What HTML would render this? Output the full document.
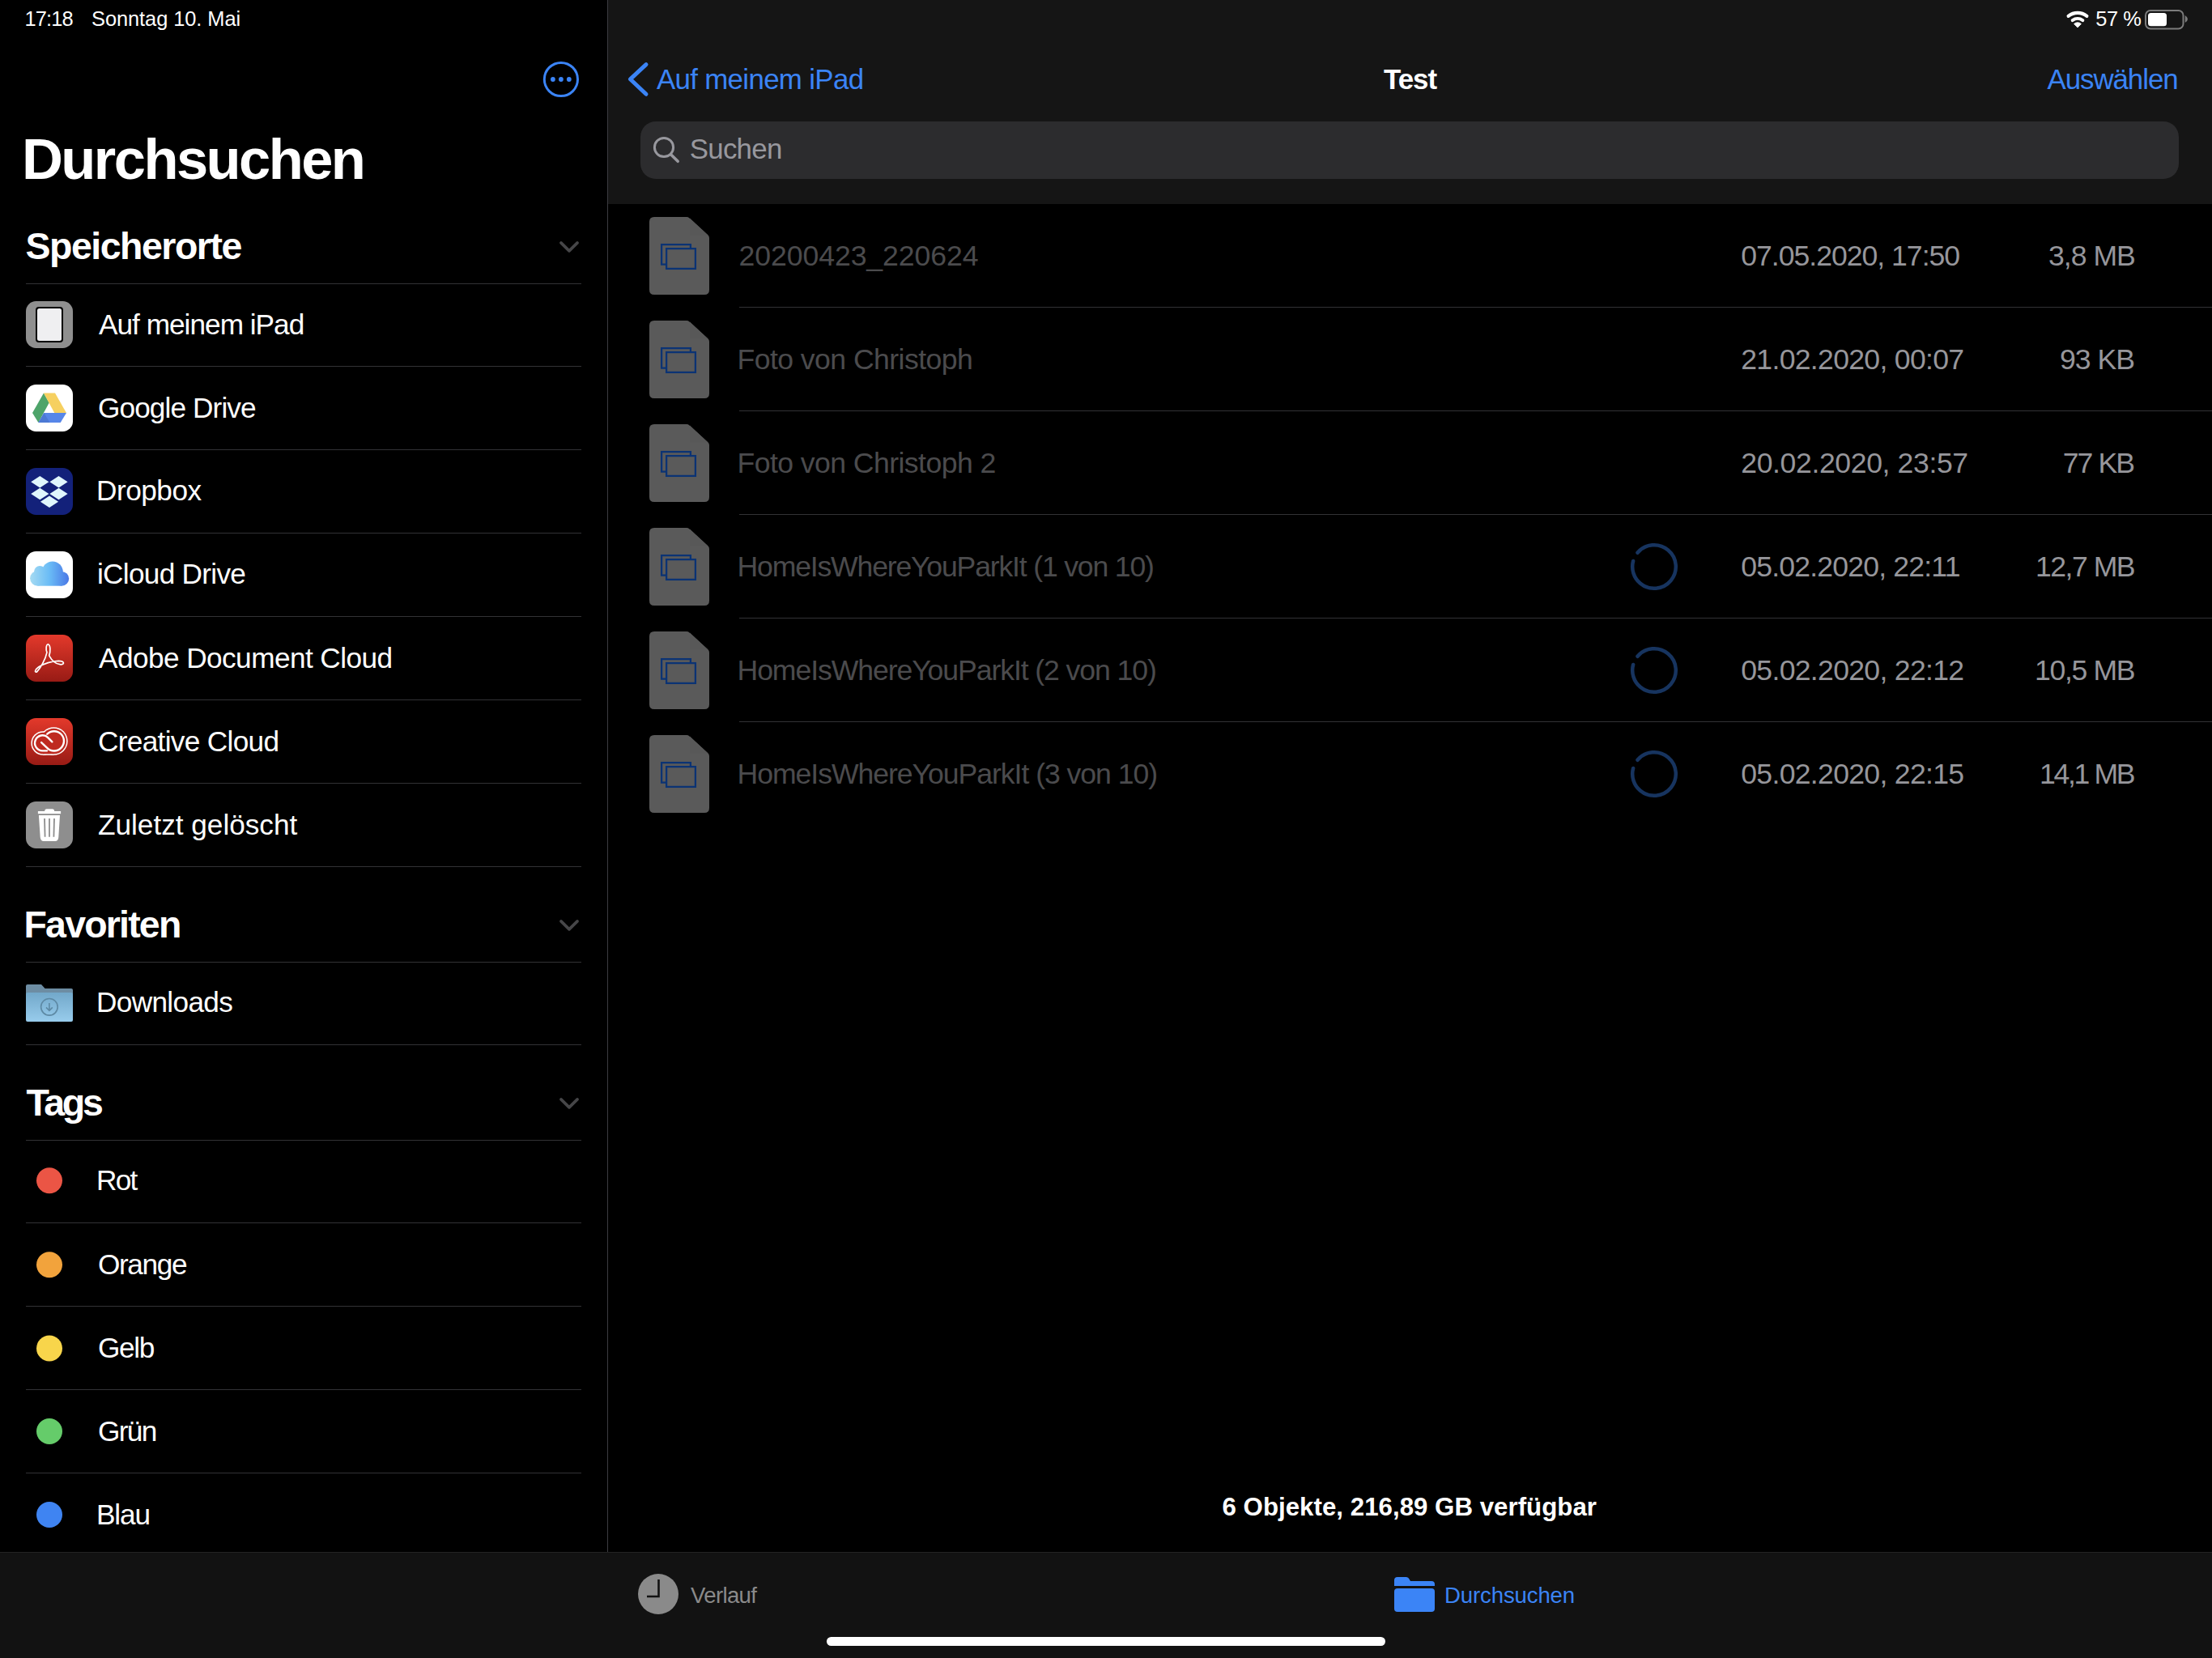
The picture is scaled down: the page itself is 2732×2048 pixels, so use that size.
<!DOCTYPE html>
<html><head><meta charset="utf-8"><style>
html,body{margin:0;padding:0;}
body{width:2732px;height:2048px;background:#000;overflow:hidden;position:relative;font-family:"Liberation Sans",sans-serif;}
svg{overflow:visible}
</style></head><body>
<div style="position:absolute;left:751px;top:0px;width:1981px;height:252px;background:#151515;"></div>
<div style="position:absolute;left:750px;top:0px;width:1px;height:1917px;background:#3c3c41;"></div>
<div style="position:absolute;left:791px;top:150px;width:1900px;height:71px;background:#2c2c2e;border-radius:19px;"></div>
<div style="position:absolute;left:0px;top:1917px;width:2732px;height:131px;background:#121212;"></div>
<div style="position:absolute;left:0px;top:1917px;width:2732px;height:1px;background:#232323;"></div>
<div style="position:absolute;left:32px;top:350px;width:686px;height:1px;background:#323235;"></div>
<div style="position:absolute;left:32px;top:452px;width:686px;height:1px;background:#323235;"></div>
<div style="position:absolute;left:32px;top:555px;width:686px;height:1px;background:#323235;"></div>
<div style="position:absolute;left:32px;top:658px;width:686px;height:1px;background:#323235;"></div>
<div style="position:absolute;left:32px;top:761px;width:686px;height:1px;background:#323235;"></div>
<div style="position:absolute;left:32px;top:864px;width:686px;height:1px;background:#323235;"></div>
<div style="position:absolute;left:32px;top:967px;width:686px;height:1px;background:#323235;"></div>
<div style="position:absolute;left:32px;top:1070px;width:686px;height:1px;background:#323235;"></div>
<div style="position:absolute;left:32px;top:1188px;width:686px;height:1px;background:#323235;"></div>
<div style="position:absolute;left:32px;top:1290px;width:686px;height:1px;background:#323235;"></div>
<div style="position:absolute;left:32px;top:1408px;width:686px;height:1px;background:#323235;"></div>
<div style="position:absolute;left:32px;top:1510px;width:686px;height:1px;background:#323235;"></div>
<div style="position:absolute;left:32px;top:1613px;width:686px;height:1px;background:#323235;"></div>
<div style="position:absolute;left:32px;top:1716px;width:686px;height:1px;background:#323235;"></div>
<div style="position:absolute;left:32px;top:1819px;width:686px;height:1px;background:#323235;"></div>
<div style="position:absolute;left:913px;top:379px;width:1819px;height:1px;background:#323235;"></div>
<div style="position:absolute;left:913px;top:507px;width:1819px;height:1px;background:#323235;"></div>
<div style="position:absolute;left:913px;top:635px;width:1819px;height:1px;background:#323235;"></div>
<div style="position:absolute;left:913px;top:763px;width:1819px;height:1px;background:#323235;"></div>
<div style="position:absolute;left:913px;top:891px;width:1819px;height:1px;background:#323235;"></div>
<svg style="position:absolute;left:668px;top:74px" width="50" height="50" viewBox="0 0 50 50"><circle cx="24.9" cy="24" r="20.6" fill="none" stroke="#3b84f6" stroke-width="3"/><circle cx="14.9" cy="24" r="2.9" fill="#3b84f6"/><circle cx="24.9" cy="24" r="2.9" fill="#3b84f6"/><circle cx="34.8" cy="24" r="2.9" fill="#3b84f6"/></svg>
<svg style="position:absolute;left:686px;top:290px" width="34" height="28" viewBox="0 0 34 28"><polyline points="6.9,9.9 17,19.9 27.1,9.9" fill="none" stroke="#464648" stroke-width="3.6" stroke-linecap="round" stroke-linejoin="round"/></svg>
<svg style="position:absolute;left:686px;top:1128px" width="34" height="28" viewBox="0 0 34 28"><polyline points="6.9,9.9 17,19.9 27.1,9.9" fill="none" stroke="#464648" stroke-width="3.6" stroke-linecap="round" stroke-linejoin="round"/></svg>
<svg style="position:absolute;left:686px;top:1347.5px" width="34" height="28" viewBox="0 0 34 28"><polyline points="6.9,9.9 17,19.9 27.1,9.9" fill="none" stroke="#464648" stroke-width="3.6" stroke-linecap="round" stroke-linejoin="round"/></svg>
<svg style="position:absolute;left:770px;top:70px" width="40" height="56" viewBox="0 0 40 56"><polyline points="28,9.7 8.4,27.8 28,46.3" fill="none" stroke="#3b84f6" stroke-width="5" stroke-linecap="round" stroke-linejoin="round"/></svg>
<svg style="position:absolute;left:800px;top:160px" width="45" height="45" viewBox="0 0 45 45"><circle cx="20" cy="22" r="11.6" fill="none" stroke="#98989e" stroke-width="3"/><line x1="28.5" y1="30.7" x2="37.2" y2="39.3" stroke="#98989e" stroke-width="3.6" stroke-linecap="round"/></svg>
<svg style="position:absolute;left:2550px;top:12px" width="32" height="24" viewBox="0 0 32 24"><g fill="none" stroke="#fff" stroke-linecap="round"><path d="M4.58,7.89 A18.15,18.15 0 0 1 27.42,7.89" stroke-width="4.1"/><path d="M9.64,13.09 A10.95,10.95 0 0 1 22.36,13.09" stroke-width="3.9"/></g><path d="M16,22 L11.55,17.55 A6.3,6.3 0 0 1 20.45,17.55 Z" fill="#fff" stroke="#fff" stroke-width="0.8" stroke-linejoin="round"/></svg>
<svg style="position:absolute;left:2646px;top:10px" width="60" height="30" viewBox="0 0 60 30"><rect x="4" y="3" width="46.5" height="22.5" rx="6" fill="none" stroke="#7c7c7c" stroke-width="2"/><rect x="7" y="6" width="23" height="16.3" rx="3.5" fill="#fff"/><path d="M52.7,9 Q56,11 56,13.5 Q56,16 52.7,18 Z" fill="#7c7c7c"/></svg>
<svg style="position:absolute;left:32px;top:372px" width="58" height="58" viewBox="0 0 58 58"><rect x="0" y="0" width="58" height="58" rx="12.5" fill="#8f8f8f"/><rect x="12" y="7" width="34" height="44" rx="4" fill="#000"/><rect x="14" y="9" width="30" height="40" rx="2.5" fill="#efeff1"/></svg>
<svg style="position:absolute;left:32px;top:475px" width="58" height="58" viewBox="0 0 58 58"><rect x="0" y="0" width="58" height="58" rx="12.5" fill="#ffffff"/><polygon points="22,10.6 28.7,22.5 15.4,47 8,35.1" fill="#4ea46a"/><polygon points="22,10.6 36,10.6 50,35.1 35.3,35.1" fill="#f6d060"/><polygon points="22.3,35.1 50,35.1 42.7,47 15.4,47" fill="#5786e8"/><polygon points="15.4,47 22.3,35.1 29.5,47" fill="#4c79d4"/></svg>
<svg style="position:absolute;left:32px;top:578px" width="58" height="58" viewBox="0 0 58 58"><rect x="0" y="0" width="58" height="58" rx="12.5" fill="#13217a"/><polygon points="6.200000000000001,17.3 17.3,10.100000000000001 28.4,17.3 17.3,24.5" fill="#e0f6fd"/><polygon points="29.4,17.3 40.5,10.100000000000001 51.6,17.3 40.5,24.5" fill="#e0f6fd"/><polygon points="6.200000000000001,32 17.3,24.8 28.4,32 17.3,39.2" fill="#e0f6fd"/><polygon points="29.4,32 40.5,24.8 51.6,32 40.5,39.2" fill="#e0f6fd"/><polygon points="17.9,41.7 29,34.5 40.1,41.7 29,48.900000000000006" fill="#e0f6fd"/></svg>
<svg style="position:absolute;left:32px;top:681px" width="58" height="58" viewBox="0 0 58 58"><rect x="0" y="0" width="58" height="58" rx="12.5" fill="#ffffff"/><defs><linearGradient id="icg" gradientUnits="userSpaceOnUse" x1="5" y1="0" x2="53" y2="0"><stop offset="0" stop-color="#a6dbf2"/><stop offset="0.5" stop-color="#6abcf6"/><stop offset="1" stop-color="#4a78e6"/></linearGradient></defs><g fill="url(#icg)"><circle cx="14.5" cy="33.3" r="9.4"/><circle cx="17.2" cy="25" r="7.1"/><circle cx="32.8" cy="25.5" r="13"/><circle cx="44.3" cy="33.8" r="8.9"/><rect x="14.5" y="33.3" width="29.8" height="9.4"/></g></svg>
<svg style="position:absolute;left:32px;top:784px" width="58" height="58" viewBox="0 0 58 58"><defs><linearGradient id="rg1" x1="0" y1="0" x2="0" y2="1"><stop offset="0" stop-color="#e3392b"/><stop offset="1" stop-color="#981b15"/></linearGradient></defs><rect width="58" height="58" rx="12.5" fill="url(#rg1)"/><path d="M27.32,11.72 C25.03,12.18 24.34,17.69 25.94,21.82 C24.11,30.99 17.69,41.54 13.56,45.9 C10.35,47.05 10.81,43.38 15.85,39.71 C21.82,36.04 32.37,32.37 40.17,32.28 C47.96,32.37 48.42,37.41 42,36.72 C36.04,36.04 31.45,30.99 28.7,25.94 C30.53,20.44 30.53,12.64 27.32,11.72 Z" fill="none" stroke="#fff" stroke-width="1.7" stroke-linejoin="round"/></svg>
<svg style="position:absolute;left:32px;top:887px" width="58" height="58" viewBox="0 0 58 58"><defs><linearGradient id="rg2" x1="0" y1="0" x2="0" y2="1"><stop offset="0" stop-color="#e3392b"/><stop offset="1" stop-color="#981b15"/></linearGradient></defs><rect width="58" height="58" rx="12.5" fill="url(#rg2)"/><g fill="#fff"><circle cx="21.1" cy="31" r="14.75"/><circle cx="34.4" cy="28.5" r="17.25"/><rect x="21.1" y="30" width="13.3" height="15.75"/></g><g fill="#bf2a20"><circle cx="21.1" cy="31" r="13.25"/><circle cx="34.4" cy="28.5" r="15.75"/><rect x="21.1" y="30" width="13.3" height="14.25"/></g><g fill="none" stroke="#fff" stroke-width="2.4" stroke-linecap="round"><path d="M26,40.35 H20.55 A9.5,9.5 0 1 1 27.27,24.13 L32.4,29.3"/><path d="M19.1,30.1 L26.21,36.94 A12.15,12.15 0 1 0 26.21,19.76"/></g></svg>
<svg style="position:absolute;left:32px;top:990px" width="58" height="58" viewBox="0 0 58 58"><rect x="0" y="0" width="58" height="58" rx="12.5" fill="#8e8e8e"/><rect x="23.2" y="9.2" width="11.9" height="5" rx="2.5" fill="#fff"/><rect x="14.9" y="12" width="28.2" height="3.2" fill="#fff"/><path d="M15.9,17 H42 L40.3,44 Q40.1,49 36,49 H22 Q18,49 17.7,44 Z" fill="#fff"/><g stroke="#8e8e8e" stroke-width="1.8"><line x1="23" y1="21" x2="23.6" y2="43.8"/><line x1="29" y1="21" x2="29" y2="43.8"/><line x1="35" y1="21" x2="34.4" y2="43.8"/></g></svg>
<svg style="position:absolute;left:32px;top:1214px" width="58" height="50" viewBox="0 0 58 50"><defs><linearGradient id="fg" x1="0" y1="0" x2="0" y2="1"><stop offset="0" stop-color="#72a8ca"/><stop offset="1" stop-color="#98ccec"/></linearGradient></defs><path d="M0,4 Q0,2 2,2 H19 L23.6,7 H56 Q58,7 58,9 V14 H0 Z" fill="#6d8da3"/><rect x="0" y="12" width="58" height="36" rx="2" fill="url(#fg)"/><circle cx="28.9" cy="29.8" r="10.3" fill="none" stroke="#5d89a4" stroke-width="1.6"/><path d="M28.9,25 V34.4 M25,30.4 L28.9,34.4 L32.8,30.4" fill="none" stroke="#5d89a4" stroke-width="1.6"/></svg>
<svg style="position:absolute;left:44px;top:1441px" width="34" height="34" viewBox="0 0 34 34"><circle cx="17" cy="17.299999999999955" r="16" fill="#eb5545"/></svg>
<svg style="position:absolute;left:44px;top:1545px" width="34" height="34" viewBox="0 0 34 34"><circle cx="17" cy="17.299999999999955" r="16" fill="#f2a33c"/></svg>
<svg style="position:absolute;left:44px;top:1648px" width="34" height="34" viewBox="0 0 34 34"><circle cx="17" cy="17.5" r="16" fill="#f8d54b"/></svg>
<svg style="position:absolute;left:44px;top:1751px" width="34" height="34" viewBox="0 0 34 34"><circle cx="17" cy="17" r="16" fill="#65cc6a"/></svg>
<svg style="position:absolute;left:44px;top:1854px" width="34" height="34" viewBox="0 0 34 34"><circle cx="17" cy="17" r="16" fill="#3f84f2"/></svg>
<svg style="position:absolute;left:802px;top:268px" width="74" height="96" viewBox="0 0 74 96"><path d="M6,0 H46 Q48,0 49.5,1.4 L72.6,22.6 Q74,24 74,26 V90 Q74,96 68,96 H6 Q0,96 0,90 V6 Q0,0 6,0 Z" fill="#5a5a5a"/><path d="M50,1.5 V22.6 H72.5 Z" fill="#585858"/><rect x="15.1" y="34.1" width="35.8" height="24.5" fill="none" stroke="#0b3374" stroke-width="2.25"/><rect x="21.1" y="39.1" width="35.8" height="24.8" fill="#5a5a5a" stroke="#0b3374" stroke-width="2.25"/></svg>
<svg style="position:absolute;left:802px;top:396px" width="74" height="96" viewBox="0 0 74 96"><path d="M6,0 H46 Q48,0 49.5,1.4 L72.6,22.6 Q74,24 74,26 V90 Q74,96 68,96 H6 Q0,96 0,90 V6 Q0,0 6,0 Z" fill="#5a5a5a"/><path d="M50,1.5 V22.6 H72.5 Z" fill="#585858"/><rect x="15.1" y="34.1" width="35.8" height="24.5" fill="none" stroke="#0b3374" stroke-width="2.25"/><rect x="21.1" y="39.1" width="35.8" height="24.8" fill="#5a5a5a" stroke="#0b3374" stroke-width="2.25"/></svg>
<svg style="position:absolute;left:802px;top:524px" width="74" height="96" viewBox="0 0 74 96"><path d="M6,0 H46 Q48,0 49.5,1.4 L72.6,22.6 Q74,24 74,26 V90 Q74,96 68,96 H6 Q0,96 0,90 V6 Q0,0 6,0 Z" fill="#5a5a5a"/><path d="M50,1.5 V22.6 H72.5 Z" fill="#585858"/><rect x="15.1" y="34.1" width="35.8" height="24.5" fill="none" stroke="#0b3374" stroke-width="2.25"/><rect x="21.1" y="39.1" width="35.8" height="24.8" fill="#5a5a5a" stroke="#0b3374" stroke-width="2.25"/></svg>
<svg style="position:absolute;left:802px;top:652px" width="74" height="96" viewBox="0 0 74 96"><path d="M6,0 H46 Q48,0 49.5,1.4 L72.6,22.6 Q74,24 74,26 V90 Q74,96 68,96 H6 Q0,96 0,90 V6 Q0,0 6,0 Z" fill="#5a5a5a"/><path d="M50,1.5 V22.6 H72.5 Z" fill="#585858"/><rect x="15.1" y="34.1" width="35.8" height="24.5" fill="none" stroke="#0b3374" stroke-width="2.25"/><rect x="21.1" y="39.1" width="35.8" height="24.8" fill="#5a5a5a" stroke="#0b3374" stroke-width="2.25"/></svg>
<svg style="position:absolute;left:802px;top:780px" width="74" height="96" viewBox="0 0 74 96"><path d="M6,0 H46 Q48,0 49.5,1.4 L72.6,22.6 Q74,24 74,26 V90 Q74,96 68,96 H6 Q0,96 0,90 V6 Q0,0 6,0 Z" fill="#5a5a5a"/><path d="M50,1.5 V22.6 H72.5 Z" fill="#585858"/><rect x="15.1" y="34.1" width="35.8" height="24.5" fill="none" stroke="#0b3374" stroke-width="2.25"/><rect x="21.1" y="39.1" width="35.8" height="24.8" fill="#5a5a5a" stroke="#0b3374" stroke-width="2.25"/></svg>
<svg style="position:absolute;left:802px;top:908px" width="74" height="96" viewBox="0 0 74 96"><path d="M6,0 H46 Q48,0 49.5,1.4 L72.6,22.6 Q74,24 74,26 V90 Q74,96 68,96 H6 Q0,96 0,90 V6 Q0,0 6,0 Z" fill="#5a5a5a"/><path d="M50,1.5 V22.6 H72.5 Z" fill="#585858"/><rect x="15.1" y="34.1" width="35.8" height="24.5" fill="none" stroke="#0b3374" stroke-width="2.25"/><rect x="21.1" y="39.1" width="35.8" height="24.8" fill="#5a5a5a" stroke="#0b3374" stroke-width="2.25"/></svg>
<svg style="position:absolute;left:2013px;top:670px" width="60" height="60" viewBox="0 0 60 60"><circle cx="30" cy="30" r="26.8" fill="none" stroke="#17345f" stroke-width="4.5" stroke-linecap="round" stroke-dasharray="155.76 12.63" transform="rotate(-140 30 30)"/></svg>
<svg style="position:absolute;left:2013px;top:798px" width="60" height="60" viewBox="0 0 60 60"><circle cx="30" cy="30" r="26.8" fill="none" stroke="#17345f" stroke-width="4.5" stroke-linecap="round" stroke-dasharray="155.76 12.63" transform="rotate(-140 30 30)"/></svg>
<svg style="position:absolute;left:2013px;top:926px" width="60" height="60" viewBox="0 0 60 60"><circle cx="30" cy="30" r="26.8" fill="none" stroke="#17345f" stroke-width="4.5" stroke-linecap="round" stroke-dasharray="155.76 12.63" transform="rotate(-140 30 30)"/></svg>
<svg style="position:absolute;left:786px;top:1942px" width="54" height="54" viewBox="0 0 54 54"><circle cx="27" cy="27" r="25" fill="#8a8a8a"/><path d="M27.5,9 V30 H13" fill="none" stroke="#121212" stroke-width="2.6"/></svg>
<svg style="position:absolute;left:1720px;top:1946px" width="54" height="48" viewBox="0 0 54 48"><path d="M2,6 Q2,2 6,2 H17 Q19.5,2 20.5,4.5 L22,7 H48 Q52,7 52,11 V13 H2 Z" fill="#3b84f6"/><rect x="2" y="16" width="50" height="29" rx="4" fill="#3b84f6"/></svg>
<div style="position:absolute;left:1021px;top:2022px;width:690px;height:11px;background:#ffffff;border-radius:5.5px;"></div>
<div style="position:absolute;left:30.50px;top:8.00px;font-weight:400;font-size:25.436px;letter-spacing:-0.875px;line-height:31px;color:#ffffff;white-space:nowrap">17:18</div>
<div style="position:absolute;left:113.00px;top:8.00px;font-weight:400;font-size:25.436px;letter-spacing:-0.071px;line-height:31px;color:#ffffff;white-space:nowrap">Sonntag 10. Mai</div>
<div style="position:absolute;left:2588.30px;top:8.00px;font-weight:400;font-size:25.436px;letter-spacing:-0.500px;line-height:31px;color:#ffffff;white-space:nowrap">57 %</div>
<div style="position:absolute;left:27.00px;top:154.00px;font-weight:700;font-size:70.495px;letter-spacing:-2.550px;line-height:85px;color:#ffffff;white-space:nowrap">Durchsuchen</div>
<div style="position:absolute;left:31.50px;top:276.00px;font-weight:700;font-size:46.512px;letter-spacing:-1.500px;line-height:56px;color:#ffffff;white-space:nowrap">Speicherorte</div>
<div style="position:absolute;left:122.00px;top:380.00px;font-weight:400;font-size:35.248px;letter-spacing:-1.000px;line-height:42px;color:#ffffff;white-space:nowrap">Auf meinem iPad</div>
<div style="position:absolute;left:121.00px;top:483.00px;font-weight:400;font-size:35.248px;letter-spacing:-0.909px;line-height:42px;color:#ffffff;white-space:nowrap">Google Drive</div>
<div style="position:absolute;left:119.00px;top:585.00px;font-weight:400;font-size:35.248px;letter-spacing:-0.500px;line-height:42px;color:#ffffff;white-space:nowrap">Dropbox</div>
<div style="position:absolute;left:120.00px;top:688.00px;font-weight:400;font-size:35.248px;letter-spacing:-0.727px;line-height:42px;color:#ffffff;white-space:nowrap">iCloud Drive</div>
<div style="position:absolute;left:122.00px;top:792.00px;font-weight:400;font-size:35.248px;letter-spacing:-0.579px;line-height:42px;color:#ffffff;white-space:nowrap">Adobe Document Cloud</div>
<div style="position:absolute;left:121.00px;top:895.00px;font-weight:400;font-size:35.248px;letter-spacing:-0.692px;line-height:42px;color:#ffffff;white-space:nowrap">Creative Cloud</div>
<div style="position:absolute;left:121.00px;top:998.00px;font-weight:400;font-size:35.248px;letter-spacing:-0.033px;line-height:42px;color:#ffffff;white-space:nowrap">Zuletzt gelöscht</div>
<div style="position:absolute;left:29.50px;top:1114.00px;font-weight:700;font-size:46.512px;letter-spacing:-1.812px;line-height:56px;color:#ffffff;white-space:nowrap">Favoriten</div>
<div style="position:absolute;left:119.00px;top:1217.00px;font-weight:400;font-size:35.248px;letter-spacing:-0.688px;line-height:42px;color:#ffffff;white-space:nowrap">Downloads</div>
<div style="position:absolute;left:32.50px;top:1334.00px;font-weight:700;font-size:46.512px;letter-spacing:-3.250px;line-height:56px;color:#ffffff;white-space:nowrap">Tags</div>
<div style="position:absolute;left:119.00px;top:1437.00px;font-weight:400;font-size:35.248px;letter-spacing:-1.750px;line-height:42px;color:#ffffff;white-space:nowrap">Rot</div>
<div style="position:absolute;left:121.00px;top:1541.00px;font-weight:400;font-size:35.248px;letter-spacing:-1.400px;line-height:42px;color:#ffffff;white-space:nowrap">Orange</div>
<div style="position:absolute;left:121.00px;top:1644.00px;font-weight:400;font-size:35.248px;letter-spacing:-1.333px;line-height:42px;color:#ffffff;white-space:nowrap">Gelb</div>
<div style="position:absolute;left:121.00px;top:1747.00px;font-weight:400;font-size:35.248px;letter-spacing:-1.667px;line-height:42px;color:#ffffff;white-space:nowrap">Grün</div>
<div style="position:absolute;left:119.00px;top:1850.00px;font-weight:400;font-size:35.248px;letter-spacing:-1.167px;line-height:42px;color:#ffffff;white-space:nowrap">Blau</div>
<div style="position:absolute;left:810.90px;top:77.00px;font-weight:400;font-size:34.884px;letter-spacing:-0.671px;line-height:42px;color:#3b84f6;white-space:nowrap">Auf meinem iPad</div>
<div style="position:absolute;left:1709.00px;top:77.00px;font-weight:700;font-size:34.884px;letter-spacing:-1.000px;line-height:42px;color:#ffffff;white-space:nowrap">Test</div>
<div style="position:absolute;left:2528.50px;top:77.00px;font-weight:400;font-size:34.884px;letter-spacing:-1.062px;line-height:42px;color:#3b84f6;white-space:nowrap">Auswählen</div>
<div style="position:absolute;left:851.80px;top:163.00px;font-weight:400;font-size:34.884px;letter-spacing:-0.760px;line-height:42px;color:#98989e;white-space:nowrap">Suchen</div>
<div style="position:absolute;left:912.50px;top:295.00px;font-weight:400;font-size:35.611px;letter-spacing:-0.071px;line-height:43px;color:#4b4b4d;white-space:nowrap">20200423_220624</div>
<div style="position:absolute;left:2150.25px;top:295.00px;font-weight:400;font-size:35.611px;letter-spacing:-1.016px;line-height:43px;color:#96969b;white-space:nowrap">07.05.2020, 17:50</div>
<div style="position:absolute;left:2530.00px;top:295.00px;font-weight:400;font-size:35.611px;letter-spacing:-1.000px;line-height:43px;color:#96969b;white-space:nowrap">3,8 MB</div>
<div style="position:absolute;left:910.50px;top:423.00px;font-weight:400;font-size:35.611px;letter-spacing:-0.559px;line-height:43px;color:#4b4b4d;white-space:nowrap">Foto von Christoph</div>
<div style="position:absolute;left:2150.25px;top:423.00px;font-weight:400;font-size:35.611px;letter-spacing:-0.703px;line-height:43px;color:#96969b;white-space:nowrap">21.02.2020, 00:07</div>
<div style="position:absolute;left:2544.00px;top:423.00px;font-weight:400;font-size:35.611px;letter-spacing:-1.000px;line-height:43px;color:#96969b;white-space:nowrap">93 KB</div>
<div style="position:absolute;left:910.50px;top:551.00px;font-weight:400;font-size:35.611px;letter-spacing:-0.568px;line-height:43px;color:#4b4b4d;white-space:nowrap">Foto von Christoph 2</div>
<div style="position:absolute;left:2150.25px;top:551.00px;font-weight:400;font-size:35.611px;letter-spacing:-0.391px;line-height:43px;color:#96969b;white-space:nowrap">20.02.2020, 23:57</div>
<div style="position:absolute;left:2547.75px;top:551.00px;font-weight:400;font-size:35.611px;letter-spacing:-1.938px;line-height:43px;color:#96969b;white-space:nowrap">77 KB</div>
<div style="position:absolute;left:910.50px;top:679.00px;font-weight:400;font-size:35.611px;letter-spacing:-1.183px;line-height:43px;color:#4b4b4d;white-space:nowrap">HomeIsWhereYouParkIt (1 von 10)</div>
<div style="position:absolute;left:2150.25px;top:679.00px;font-weight:400;font-size:35.611px;letter-spacing:-0.828px;line-height:43px;color:#96969b;white-space:nowrap">05.02.2020, 22:11</div>
<div style="position:absolute;left:2514.00px;top:679.00px;font-weight:400;font-size:35.611px;letter-spacing:-1.500px;line-height:43px;color:#96969b;white-space:nowrap">12,7 MB</div>
<div style="position:absolute;left:910.50px;top:807.00px;font-weight:400;font-size:35.611px;letter-spacing:-1.083px;line-height:43px;color:#4b4b4d;white-space:nowrap">HomeIsWhereYouParkIt (2 von 10)</div>
<div style="position:absolute;left:2150.25px;top:807.00px;font-weight:400;font-size:35.611px;letter-spacing:-0.703px;line-height:43px;color:#96969b;white-space:nowrap">05.02.2020, 22:12</div>
<div style="position:absolute;left:2513.00px;top:807.00px;font-weight:400;font-size:35.611px;letter-spacing:-1.333px;line-height:43px;color:#96969b;white-space:nowrap">10,5 MB</div>
<div style="position:absolute;left:910.50px;top:935.00px;font-weight:400;font-size:35.611px;letter-spacing:-1.043px;line-height:43px;color:#4b4b4d;white-space:nowrap">HomeIsWhereYouParkIt (3 von 10)</div>
<div style="position:absolute;left:2150.25px;top:935.00px;font-weight:400;font-size:35.611px;letter-spacing:-0.703px;line-height:43px;color:#96969b;white-space:nowrap">05.02.2020, 22:15</div>
<div style="position:absolute;left:2519.00px;top:935.00px;font-weight:400;font-size:35.611px;letter-spacing:-2.333px;line-height:43px;color:#96969b;white-space:nowrap">14,1 MB</div>
<div style="position:absolute;left:1509.50px;top:1843.00px;font-weight:700;font-size:31.251px;letter-spacing:0.017px;line-height:38px;color:#ffffff;white-space:nowrap">6 Objekte, 216,89 GB verfügbar</div>
<div style="position:absolute;left:853.00px;top:1954.00px;font-weight:400;font-size:27.617px;letter-spacing:-0.667px;line-height:33px;color:#8a8a8a;white-space:nowrap">Verlauf</div>
<div style="position:absolute;left:1784.00px;top:1954.00px;font-weight:400;font-size:27.617px;letter-spacing:-0.150px;line-height:33px;color:#3b84f6;white-space:nowrap">Durchsuchen</div>
</body></html>
